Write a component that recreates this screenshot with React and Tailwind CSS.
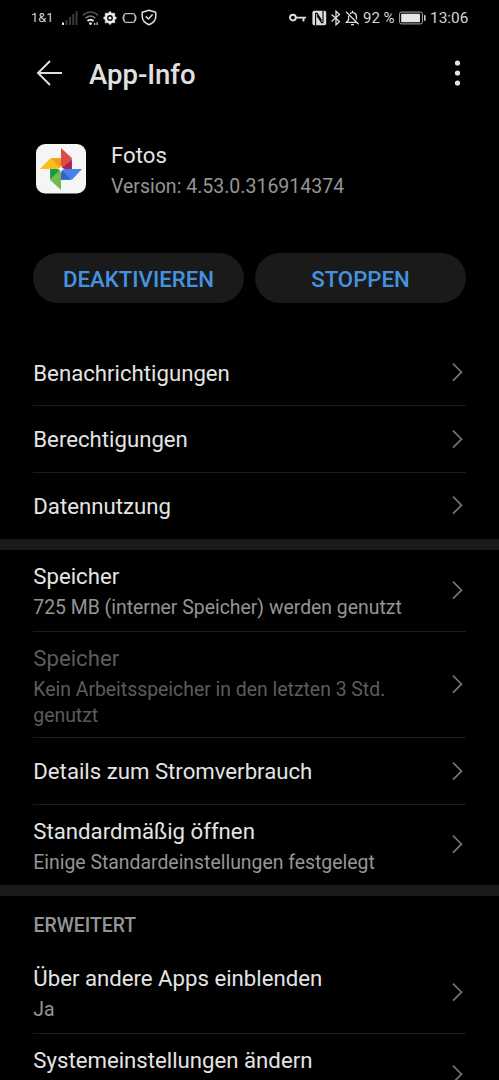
import { Fragment } from 'react';

const sections = [
  {
    rows: [
      { title: 'Benachrichtigungen', height: 'h-[67px]' },
      { title: 'Berechtigungen', height: 'h-[66.5px]' },
      { title: 'Datennutzung', height: 'h-[66.5px]' },
    ],
  },
  {
    rows: [
      { title: 'Speicher', summary: '725 MB (interner Speicher) werden genutzt', height: 'h-[81.5px]' },
      {
        title: 'Speicher',
        summary: 'Kein Arbeitsspeicher in den letzten 3 Std. genutzt',
        height: 'h-[106.5px]',
        disabled: true,
      },
      { title: 'Details zum Stromverbrauch', height: 'h-[66.5px]' },
      { title: 'Standardmäßig öffnen', summary: 'Einige Standardeinstellungen festgelegt', height: 'h-[80.5px]' },
    ],
  },
  {
    heading: 'ERWEITERT',
    rows: [
      { title: 'Über andere Apps einblenden', summary: 'Ja', height: 'h-[81.5px]' },
      { title: 'Systemeinstellungen ändern', height: 'h-[81px]', top: true },
    ],
  },
];

function StatusBar() {
  return (
    <div className="flex h-[35px] shrink-0 items-center justify-between pl-[31px] pr-[30px] text-[#d4d4d4]">
      <div className="flex items-center">
        <span className="w-[31px] text-[12.8px] leading-4">1&amp;1</span>

        {/* Signal */}
        <svg width="16" height="16" viewBox="0 0 16 16" fill="#3d3d3d">
          <rect x="0" y="12.5" width="2" height="2.5" fill="#e8e8e8" />
          <rect x="3.6" y="10" width="1.9" height="5" />
          <rect x="7" y="7" width="1.9" height="8" />
          <rect x="10.3" y="4" width="1.9" height="11" />
          <rect x="13.6" y="1" width="1.9" height="14" />
        </svg>

        {/* WLAN */}
        <svg className="ml-1" width="17" height="16" viewBox="0 0 17 16" fill="none" strokeWidth="1.6">
          <path d="M1 5.5C5 1 12 1 16 5.5" stroke="#4a4a4a" />
          <path d="M3.6 8.3c2.8-3 7-3 9.8 0" stroke="#808080" />
          <path d="M5.5 11c1.6-1.8 4.4-1.8 6 0" stroke="#e8e8e8" strokeWidth="2" />
          <circle cx="8.5" cy="13.6" r="1.4" fill="#e8e8e8" />
          <path d="M12.6 13v2M15.2 12.2v2.8" stroke="#ccc" strokeWidth="1.3" />
        </svg>

        {/* Zahnrad */}
        <svg className="ml-1" width="14" height="14" viewBox="0 0 14 14">
          <path
            d="M7 .2 8.8 2.3 11.8 2.2 11.7 5.2 13.8 7 11.7 8.8 11.8 11.8 8.8 11.7 7 13.8 5.2 11.7 2.2 11.8 2.3 8.8.2 7 2.3 5.2 2.2 2.2 5.2 2.3Z"
            fill="#eee"
            stroke="#eee"
            strokeWidth=".5"
          />
          <circle cx="7" cy="7" r="2.9" fill="#000" />
          <circle cx="7" cy="7" r="1.6" fill="#eee" />
        </svg>

        {/* Spielmodus */}
        <svg className="ml-[5px]" width="15" height="12" viewBox="0 0 15 12" fill="none" stroke="#bbb" strokeWidth="1.3">
          <path d="M3.8 1.7h7.4q1.2 0 1.5 1.2M3.8 10.3h7.4q1.2 0 1.5-1.2M3.8 1.7q-1.2 0-1.5 1.2M3.8 10.3q-1.2 0-1.5-1.2" />
          <path d="M2.3 2.9Q.5 6 2.3 9.1M12.7 2.9q1.8 3.1 0 6.2" strokeWidth="1.8" />
        </svg>

        <svg className="ml-1" width="16" height="17" viewBox="0 0 16 17" fill="none" stroke="#ddd" strokeWidth="1.5">
          <path d="M8 1.2 14.8 3.3V7.2C14.8 11.4 11.5 14.2 8 15.8 4.5 14.2 1.2 11.4 1.2 7.2V3.3Z" strokeLinejoin="round" />
          <path d="m4.8 7.4 2.6 2.6 4.2-4.5" />
        </svg>
      </div>

      <div className="flex items-center">
        <svg width="17" height="10" viewBox="0 0 17 10" fill="none" stroke="#ddd" strokeWidth="1.9">
          <circle cx="3.9" cy="4.6" r="2.9" />
          <path d="M6.8 4.6H17M14.5 4.5v4" />
        </svg>

        {/* NFC */}
        <svg className="ml-1.5" width="15" height="16" viewBox="0 0 15 16">
          <rect x=".4" y=".8" width="13.8" height="14.4" rx="1.8" fill="#ddd" />
          <path d="M3.6 15.2V3.4h1.5l4.5 7.2M11 .8v11.8H9.6L5.1 5.6" fill="none" stroke="#000" strokeWidth="1.1" />
        </svg>

        <svg className="ml-[3px]" width="12" height="16" viewBox="0 0 12 16" fill="none" stroke="#ddd" strokeWidth="1.3">
          <path d="m1.5 4.5 8 7L6 14.8V1.2l3.5 3.3-8 7" />
        </svg>

        {/* Stummgeschaltete Glocke */}
        <svg className="ml-[3px]" width="15" height="16" viewBox="0 0 15 16" fill="none" stroke="#ddd" strokeWidth="1.3">
          <path d="M5 3.8C7.2 1.6 11.4 2.6 11.4 6.6v3M3.6 5.8v4L1.4 12.3h10M6 14.6h3M7.6.8v2" />
          <path d="m1 1.8 12.6 12.4" />
        </svg>

        <span className="ml-[3px] w-[36px] whitespace-nowrap text-[15px] leading-4">92 %</span>

        <svg width="27" height="14" viewBox="0 0 27 14">
          <rect x=".6" y="1.1" width="22.8" height="11.8" rx="1.6" fill="none" stroke="#aaa" strokeWidth="1" />
          <rect x="2.2" y="2.7" width="18.8" height="8.6" rx=".5" fill="#e6e6e6" />
          <rect x="25" y="4.2" width="1.6" height="5.6" fill="#ccc" />
        </svg>

        <span className="ml-1 w-[39px] whitespace-nowrap text-[15.4px] leading-4">13:06</span>
      </div>
    </div>
  );
}

function PhotosIcon() {
  return (
    <svg className="shrink-0" width="50" height="50" viewBox="0 0 50 50">
      <rect width="50" height="49.5" rx="9" fill="#f5f5f5" />
      <path d="M25 4 35.8 14V25H25Z" fill="#db4f42" />
      <path d="M25 25 35.8 16V25Z" fill="#ad1d5a" />
      <path d="M46 25 36 35.8H25V25Z" fill="#4482ec" />
      <path d="M25 25 34.5 35.8H25Z" fill="#3265c9" />
      <path d="M25 46 14.2 36V25H25Z" fill="#72bb4b" />
      <path d="M25 25 14.2 35V25Z" fill="#159653" />
      <path d="M4 25 14.5 14.2H25V25Z" fill="#fbbd16" />
      <path d="M25 25 15.5 14.2H25Z" fill="#f39a20" />
      <path d="m25 21 1 3 3 1-3 1-1 3-1-3-3-1 3-1Z" fill="#fff" />
    </svg>
  );
}

function Row({ title, summary, height, disabled, top, last }) {
  return (
    <div
      className={`mx-[33px] flex shrink-0 justify-between border-b ${height} ${
        last ? 'border-transparent' : 'border-[#1c1c1c]'
      }`}
    >
      <div className={`w-[385px] pl-[0.3px] ${summary || top ? 'pt-[13px]' : 'self-center pt-px'}`}>
        <div className={`text-[22.2px] leading-[26px] ${disabled ? 'text-[#5c5c5c]' : 'text-[#e4e4e4]'}`}>{title}</div>
        {summary && (
          <div className={`mt-[6px] text-[19.4px] leading-[26px] ${disabled ? 'text-[#5c5c5c]' : 'text-[#959595]'}`}>
            {summary}
          </div>
        )}
      </div>
      <svg
        className="mr-[3px] shrink-0 self-center"
        width="11"
        height="20"
        viewBox="0 0 11 20"
        fill="none"
        stroke="#747474"
        strokeWidth="1.7"
      >
        <path d="m1 1.7 8.5 8.5L1 18.7" />
      </svg>
    </div>
  );
}

export default function App() {
  return (
    <div className="flex h-[1080px] w-[499px] flex-col overflow-hidden bg-black font-[Roboto,sans-serif]">
      <StatusBar />

      <header className="flex h-[76px] shrink-0 items-center pl-9 pr-[36px]">
        <svg width="27" height="28" viewBox="0 0 27 28" fill="none" stroke="#e0e0e0" strokeWidth="1.9">
          <path d="M26 14H2M14 2 2 14l12 12" />
        </svg>
        <h1 className="ml-[26px] flex-1 pt-1 text-[27.5px] font-medium leading-8 text-[#e0e0e0]">App-Info</h1>
        <svg width="11" height="28" viewBox="0 0 11 28" fill="#e4e4e4">
          <circle cx="5.5" cy="4" r="2.6" />
          <circle cx="5.5" cy="14" r="2.6" />
          <circle cx="5.5" cy="24" r="2.6" />
        </svg>
      </header>

      <div className="mt-[33px] flex h-[50px] shrink-0 items-start pl-9">
        <PhotosIcon />
        <div className="ml-[25px] -mt-0.5">
          <div className="text-[22.2px] leading-[26px] text-[#e4e4e4]">Fotos</div>
          <div className="mt-[6px] text-[19.5px] leading-[26px] text-[#959595]">Version: 4.53.0.316914374</div>
        </div>
      </div>

      <div className="mx-[33px] mb-9 mt-[59px] grid h-[50px] shrink-0 grid-cols-2 gap-[11px] text-[22.2px] font-medium text-[#4593e0]">
        <button className="rounded-full bg-[#1a1a1a] pt-[3px]">DEAKTIVIEREN</button>
        <button className="rounded-full bg-[#1a1a1a] pt-[3px]">STOPPEN</button>
      </div>

      {sections.map((section, i) => (
        <Fragment key={i}>
          {i > 0 && <div className="h-[11px] shrink-0 bg-[#1a1a1a]" />}
          {section.heading && (
            <h2 className="h-14 shrink-0 px-[33.5px] pt-[18px] text-[19.4px] font-medium leading-6 text-[#949494]">
              {section.heading}
            </h2>
          )}
          {section.rows.map((row, j) => (
            <Row key={j} {...row} last={j === section.rows.length - 1} />
          ))}
        </Fragment>
      ))}
    </div>
  );
}
